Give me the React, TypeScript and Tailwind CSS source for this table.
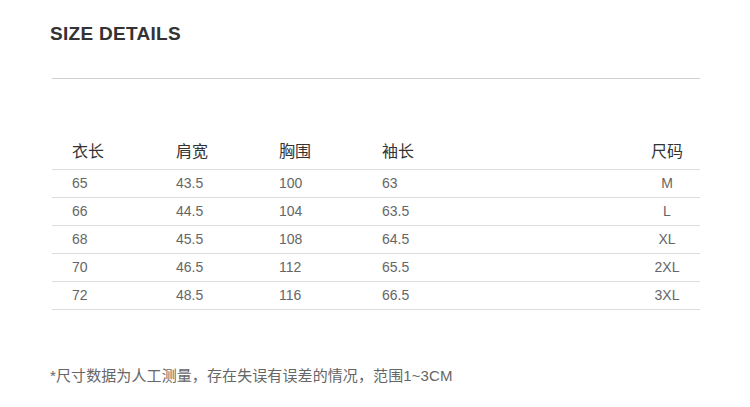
const rows = [
  ["65", "43.5", "100", "63", "M"],
  ["66", "44.5", "104", "63.5", "L"],
  ["68", "45.5", "108", "64.5", "XL"],
  ["70", "46.5", "112", "65.5", "2XL"],
  ["72", "48.5", "116", "66.5", "3XL"],
];

export default function App() {
  return (
    <div
      className="w-[750px] h-[407px] bg-white"
      style={{ fontFamily: '"Liberation Sans", "Noto Sans CJK SC", sans-serif' }}
    >
      <div className="pt-[23px] px-[50px]">
        <h2 className="text-[19px] leading-[22px] font-bold text-[#333] tracking-[0.3px]">
          SIZE DETAILS
        </h2>
        <div className="mt-[33px] ml-[2px] w-[648px] border-t border-[#d0d0d0]" />
      </div>

      <table className="ml-[52px] mt-[56px] w-[648px] border-collapse">
        <thead>
          <tr className="border-b border-[#dcdcdc] text-[16px] text-[#333]">
            <th className="w-[104px] pl-[20px] h-[34px] text-left font-normal">衣长</th>
            <th className="w-[103px] pl-[20px] text-left font-normal">肩宽</th>
            <th className="w-[103px] pl-[20px] text-left font-normal">胸围</th>
            <th className="pl-[20px] text-left font-normal">袖长</th>
            <th className="w-[66px] text-center font-normal">尺码</th>
          </tr>
        </thead>
        <tbody>
          {rows.map((r) => (
            <tr key={r[0]} className="border-b border-[#dcdcdc] text-[14px] text-[#666]">
              <td className="pl-[20px] h-[28px]">{r[0]}</td>
              <td className="pl-[20px]">{r[1]}</td>
              <td className="pl-[20px]">{r[2]}</td>
              <td className="pl-[20px]">{r[3]}</td>
              <td className="text-center">{r[4]}</td>
            </tr>
          ))}
        </tbody>
      </table>

      <p className="ml-[50px] mt-[55px] text-[15px] tracking-[0.1px] text-[#666]">
        *尺寸数据为人工测量，存在失误有误差的情况，范围1~3CM
      </p>
    </div>
  );
}
